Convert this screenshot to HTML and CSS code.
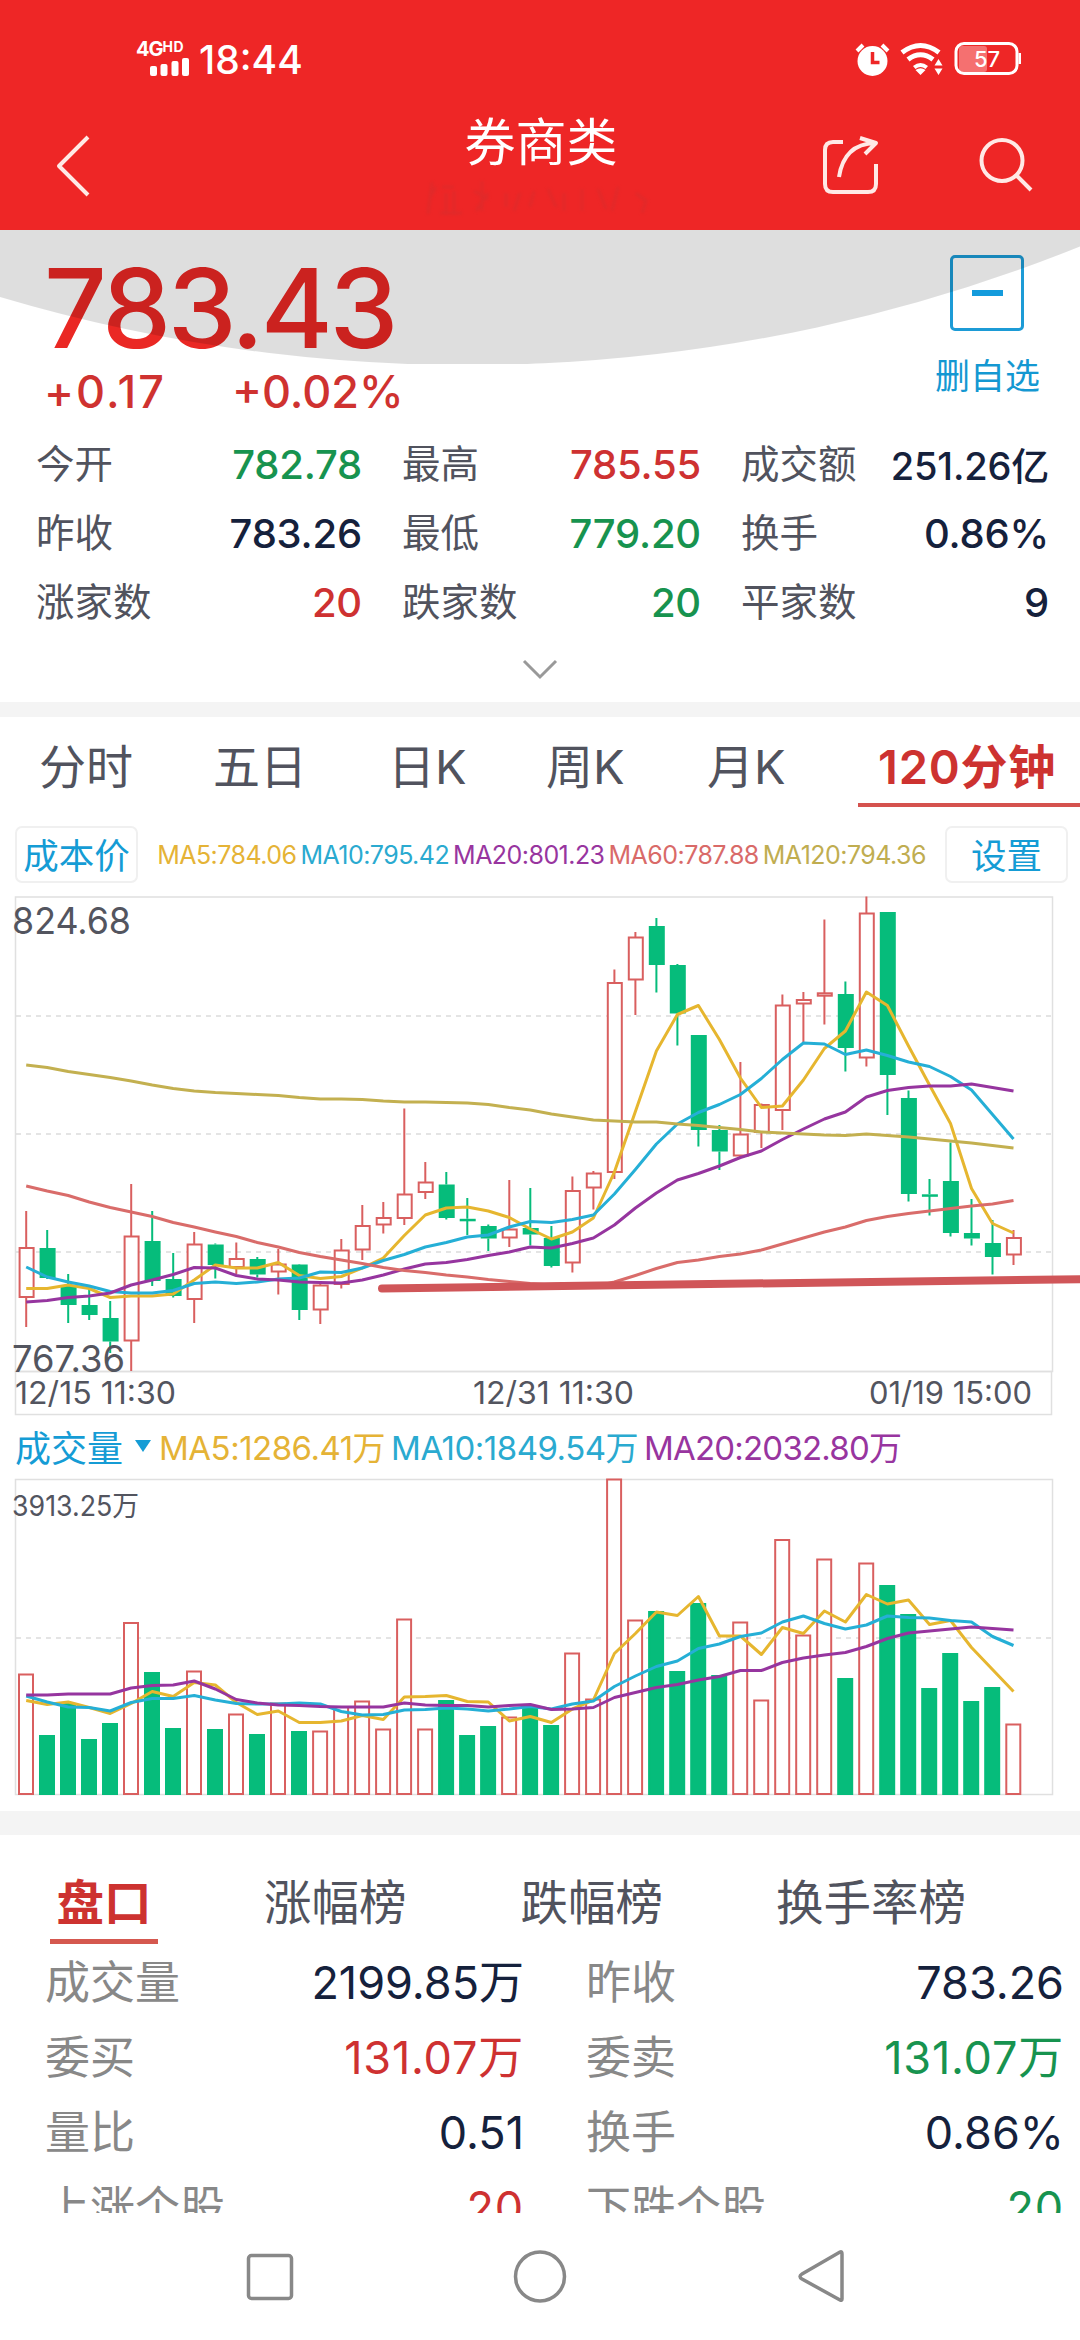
FILE: index.html
```html
<!DOCTYPE html>
<html lang="zh-CN">
<head>
    <meta charset="UTF-8">
    <meta name="viewport" content="width=device-width, initial-scale=1.0">
    <title>券商类</title>
    <link rel="stylesheet" href="styles.css">
</head>
<body>
    <header class="header">
        <div class="status">
            <div class="signal">
                <div class="network">4G<sup>HD</sup></div>
                <svg class="bars" width="40" height="19" viewBox="0 0 40 19">
                    <rect x="0" y="8" width="7" height="10" rx="2"/>
                    <rect x="10.500" y="6" width="7" height="12" rx="2"/>
                    <rect x="21.500" y="3" width="7" height="15" rx="2"/>
                    <rect x="32" y="0" width="7" height="18" rx="2"/>
                </svg>
            </div>
            <div class="clock">18:44</div>
            <svg class="status-icons" width="170" height="40" viewBox="0 0 170 40">
                <!-- alarm -->
                <circle cx="21.500" cy="22" r="15" fill="#fff"/>
                <path d="M6 12l6-6M37 12l-6-6" stroke="#fff" stroke-width="4"/>
                <path d="M21.500 13v10.500h7" fill="none" stroke="#ee2626" stroke-width="3.500"/>
                <!-- wifi -->
                <path d="M51 13.500Q69.500-0.500 88 13.500M57 20.500Q69.500 11 82 20.500" fill="none" stroke="#fff" stroke-width="5"/>
                <path d="M62 27Q69.500 21 77 27l-2.500 3Q69.500 26 64.500 30zM64.500 31Q69.500 27.500 74.500 31L69.500 36z" fill="#fff"/>
                <path d="M87.500 20l4 6.500h-8zM87.500 36l4-6.500h-8z" fill="#fff"/>
                <!-- battery -->
                <rect x="108" y="7" width="28" height="26" rx="3" fill="#f57070"/>
                <rect x="105" y="4.500" width="61" height="30" rx="8" fill="none" stroke="#fff" stroke-width="3"/>
                <path d="M169 14v11" stroke="#fff" stroke-width="3"/>
                <text x="123" y="27.500" class="battery-text">57</text>
            </svg>
        </div>
        <div class="title-bar">
            <svg class="back" width="34" height="62" viewBox="0 0 34 62">
                <path d="M32 2L3 31l29 29"/>
            </svg>
            <h1>券商类</h1>
            <svg class="actions" width="220" height="64" viewBox="0 0 220 64">
                <path d="M24 11H14q-8 0-8 8v34q0 8 8 8h35q8 0 8-8V33"/>
                <path d="M20 46Q25 13 56 12M41 7l16 5-11 11"/>
                <circle cx="183" cy="29.500" r="20.500"/>
                <path d="M197 44l15 15"/>
            </svg>
        </div>
        <svg class="subtitle" width="232" height="40" viewBox="0 0 232 40">
            <path d="M8 3l-4 32M12 8l-6 10M18 8h12M22 14v22M30 12v24M16 34h22M58 2v30M50 12l14 8M64 14l-12 18M82 14v14M96 14l-6 18M110 12l-4 16M124 10l8 18M140 14v18M158 10v22M174 10l8 20M194 8l-6 24M212 14l10 8-4 12"/>
        </svg>
    </header>

    <section class="quote">
        <div class="quote-top">
            <div>
                <div class="price">783.43</div>
                <div class="change"><span>+0.17</span><span>+0.02%</span></div>
            </div>
            <div class="watch">
                <div class="watch-box"><i></i></div>
                <div>删自选</div>
            </div>
        </div>
        <div class="stats">
            <div><span>今开</span><b class="green">782.78</b></div>
            <div><span>最高</span><b class="red">785.55</b></div>
            <div><span>成交额</span><b class="amount">251.26亿</b></div>
            <div><span>昨收</span><b>783.26</b></div>
            <div><span>最低</span><b class="green">779.20</b></div>
            <div><span>换手</span><b>0.86%</b></div>
            <div><span>涨家数</span><b class="red">20</b></div>
            <div><span>跌家数</span><b class="green">20</b></div>
            <div><span>平家数</span><b>9</b></div>
        </div>
        <svg class="more" width="36" height="22" viewBox="0 0 36 22"><path d="M2 2l16 16L34 2"/></svg>
        <svg class="arc" width="1080" height="134" viewBox="0 0 1080 134">
            <path d="M0 0H1080V16.500A1640 1640 0 0 1 0 67z"/>
        </svg>
    </section>

    <section class="chart">
        <nav class="periods">
            <span>分时</span><span>五日</span><span>日K</span><span>周K</span><span>月K</span><span class="active">120分钟</span>
        </nav>
        <div class="indicators">
            <button class="cost">成本价</button>
            <div class="ma-list">
                <span class="ma5">MA5:784.06</span><span class="ma10">MA10:795.42</span><span class="ma20">MA20:801.23</span><span class="ma60">MA60:787.88</span><span class="ma120">MA120:794.36</span>
            </div>
            <button>设置</button>
        </div>
        <svg id="kline" width="1080" height="530" viewBox="0 8 1080 530"></svg>
        <div class="volume-head">
            <span class="volume-name">成交量</span>
            <i class="arrow"></i>
            <span class="ma5">MA5:1286.41万</span>
            <span class="ma10">MA10:1849.54万</span>
            <span class="ma20">MA20:2032.80万</span>
        </div>
        <svg id="volume" width="1080" height="333" viewBox="0 55 1080 333"></svg>
    </section>

    <section class="detail">
        <nav class="detail-tabs">
            <span class="active">盘口</span><span>涨幅榜</span><span>跌幅榜</span><span>换手率榜</span>
        </nav>
        <div class="detail-grid">
            <div><span>成交量</span><b>2199.85万</b></div>
            <div><span>昨收</span><b>783.26</b></div>
            <div><span>委买</span><b class="red">131.07万</b></div>
            <div><span>委卖</span><b class="green">131.07万</b></div>
            <div><span>量比</span><b>0.51</b></div>
            <div><span>换手</span><b>0.86%</b></div>
            <div><span>上涨个股</span><b class="red">20</b></div>
            <div><span>下跌个股</span><b class="green">20</b></div>
        </div>
    </section>

    <footer class="system-nav">
        <svg width="1080" height="127" viewBox="0 0 1080 127">
            <rect x="248.500" y="42.500" width="43" height="43" rx="3"/>
            <circle cx="540" cy="63.500" r="24.500"/>
            <path d="M842 41v45q0 2-2 1L802 66q-4-2.500 0-5l38-22q2-1 2 2z"/>
        </svg>
    </footer>
    <script src="script.js"></script>
</body>
</html>
```
FILE: styles.css
```css
* {
    box-sizing: border-box;
}

body {
    margin: 0;
    width: 1080px;
    height: 2340px;
    overflow: hidden;
    background-color: #fff;
    font-family: Inter, "Noto Sans CJK SC", sans-serif;
    color: #51535e;
}

svg {
    display: block;
}

b {
    font-weight: 500;
    color: #15213c;
}

.red {
    color: #ce3131;
}

.green {
    color: #17934f;
}

/* header */
.header {
    height: 230px;
    background-color: #ee2626;
    color: #fff;
    position: relative;
}

.status {
    display: flex;
    height: 80px;
    padding-top: 39px;
    padding-left: 136px;
}

.signal {
    width: 63px;
}

.network {
    height: 19px;
    line-height: 21px;
    font-size: 20px;
    font-weight: 700;
    letter-spacing: -1px;
}

.network sup {
    font-size: 14px;
    line-height: 0;
    vertical-align: 4px;
    letter-spacing: 0.5px;
}

.bars {
    margin-left: 14px;
    fill: #fff;
}

.clock {
    width: 652px;
    font-size: 39px;
    line-height: 42px;
    font-weight: 500;
}

.battery-text {
    font-size: 22px;
    font-weight: 500;
    fill: #fff;
}

.title-bar {
    display: flex;
    justify-content: space-between;
    height: 130px;
    padding: 25px 41px 0 56px;
}

.title-bar svg {
    fill: none;
    stroke: #ffe9e6;
    stroke-width: 4;
    stroke-linejoin: round;
}

.back {
    margin-top: 30px;
}

.actions {
    margin-top: 26px;
}

.title-bar h1 {
    margin: 0 0 0 173px;
    font-size: 51px;
    line-height: 76px;
    font-weight: 400;
}

.subtitle {
    position: absolute;
    left: 424px;
    top: 179px;
    fill: none;
    stroke: #d72d2d;
    stroke-width: 3;
    opacity: 0.6;
    filter: blur(1.5px);
}

/* quote */
.quote {
    position: relative;
    height: 487px;
    border-bottom: 15px solid #f4f4f4;
}

.arc {
    position: absolute;
    left: 0;
    top: 0;
    fill: rgba(0, 0, 0, 0.13);
}

.quote-top {
    display: flex;
    justify-content: space-between;
    height: 200px;
    padding: 25px 40px 0 44px;
}

.price {
    height: 105px;
    font-size: 110px;
    line-height: 106px;
    font-weight: 500;
    letter-spacing: -3.4px;
    color: #ea2824;
}

.change {
    display: flex;
    gap: 66px;
    font-size: 45px;
    line-height: 64px;
    font-weight: 500;
    color: #cf3230;
}

.change span:first-child {
    letter-spacing: 2px;
}

.watch {
    display: flex;
    flex-direction: column;
    align-items: center;
    font-size: 35px;
    line-height: 54px;
    color: #1498d2;
}

.watch-box {
    display: flex;
    align-items: center;
    justify-content: center;
    width: 74px;
    height: 76px;
    margin-bottom: 18px;
    border: 3px solid #1c9bd6;
    border-radius: 5px;
}

.watch-box i {
    width: 31px;
    height: 6px;
    background-color: #149bdc;
}

.stats {
    display: grid;
    grid-template-columns: 326px 299px 308px;
    column-gap: 40px;
    grid-auto-rows: 69px;
    padding-left: 36px;
}

.stats div {
    display: flex;
    justify-content: space-between;
    line-height: 69px;
    font-size: 38.500px;
}

.stats b {
    font-size: 40px;
    letter-spacing: -0.2px;
}

.stats .amount {
    font-size: 38px;
    padding-top: 2px;
}

.more {
    margin: 22px auto 0;
    fill: none;
    stroke: #999;
    stroke-width: 3;
}

/* charts */
.chart {
    height: 1118px;
    border-bottom: 24px solid #f4f4f4;
}

.periods {
    display: flex;
    height: 90px;
    padding-left: 39px;
    font-size: 47px;
    line-height: 99px;
}

.periods span:nth-child(1) {
    width: 174px;
}

.periods span:nth-child(2) {
    width: 175px;
}

.periods span:nth-child(3) {
    width: 158px;
}

.periods span:nth-child(4) {
    width: 161px;
}

.periods span:nth-child(5) {
    width: 151px;
}

.periods .active {
    flex: 1;
    padding-left: 20px;
    border-bottom: 4px solid #d5524e;
    font-weight: 600;
    color: #cd3230;
    letter-spacing: 0.8px;
    white-space: nowrap;
}

.indicators {
    display: flex;
    align-items: center;
    justify-content: space-between;
    height: 81px;
    padding: 13px 12px 0 15px;
}

.indicators button {
    width: 123px;
    height: 57px;
    padding: 0 0 3px;
    border: 2px solid #f0f0f0;
    border-radius: 7px;
    background-color: #fff;
    font-family: inherit;
    font-size: 35.500px;
    color: #159cd5;
}

.ma-list {
    display: flex;
    gap: 4px;
    padding-top: 2px;
    font-size: 25px;
    letter-spacing: -0.54px;
    white-space: nowrap;
}

.ma5 {
    color: #e5b336;
}

.ma10 {
    color: #2aaad0;
}

.ma20 {
    color: #98359f;
}

.ma60 {
    color: #d96a68;
}

.ma120 {
    color: #c0ad50;
}

.volume-head {
    display: flex;
    align-items: center;
    gap: 6px;
    height: 57px;
    padding-left: 15px;
    padding-bottom: 1px;
    font-size: 33px;
    letter-spacing: -0.5px;
    white-space: nowrap;
}

.volume-head .ma20 {
    letter-spacing: -0.8px;
}

.volume-name {
    font-size: 36px;
    letter-spacing: 0;
    color: #159cd5;
}

.arrow {
    margin: 0 2px 0 6px;
    border: 8px solid transparent;
    border-top: 12px solid #159cd5;
    border-bottom: 0;
}

.box {
    fill: none;
    stroke: #e0e0e0;
    stroke-width: 1.5;
}

.grid-line {
    stroke: #dcdcdc;
    stroke-width: 1.5;
    stroke-dasharray: 5 5;
}

.up {
    fill: #fff;
    stroke: #d95f5f;
    stroke-width: 2;
}

.down {
    fill: #06bc7b;
    stroke: #06bc7b;
    stroke-width: 2;
}

.line {
    fill: none;
    stroke-width: 3;
    stroke-linejoin: round;
}

.line-ma5 {
    stroke: #e6b62f;
}

.line-ma10 {
    stroke: #25afd6;
}

.line-ma20 {
    stroke: #96359f;
}

.line-ma60 {
    stroke: #d96c6a;
}

.line-ma120 {
    stroke: #c3b050;
}

.trend {
    stroke: #d05659;
    stroke-width: 8;
    stroke-linecap: round;
}

.axis {
    fill: #53555f;
}

/* bottom list */
.detail {
    height: 378px;
    overflow: hidden;
}

.detail-tabs {
    display: flex;
    height: 109px;
    padding-left: 50px;
    font-size: 47.5px;
    line-height: 136px;
}

.detail-tabs span:nth-child(2) {
    margin-left: 106px;
}

.detail-tabs span:nth-child(3) {
    margin-left: 114px;
}

.detail-tabs span:nth-child(4) {
    margin-left: 113px;
}

.detail-tabs .active {
    width: 108px;
    border-bottom: 5px solid #d5584f;
    text-align: center;
    font-weight: 700;
    color: #cd3230;
}

.detail-grid {
    display: grid;
    grid-template-columns: 479px 478px;
    column-gap: 62px;
    padding-left: 45px;
}

.detail-grid div {
    display: flex;
    justify-content: space-between;
    height: 75px;
    line-height: 77px;
    font-size: 45px;
    color: #888;
}

.detail-grid b {
    font-weight: 400;
    font-size: 45px;
}

.detail-grid .red,
.detail-grid .green {
    letter-spacing: 0.8px;
}

.system-nav {
    background-color: #fff;
}

.system-nav svg {
    fill: none;
    stroke: #888;
    stroke-width: 3.5;
}
```
FILE: script.js
```js
const STEP = 21.006;
const FIRST = 26.2;

// [up, high, body top, body bottom, low]
const candles = [
    [1, 331, 368, 417, 447], [0, 350, 368, 398, 399], [0, 394, 405, 425, 443], [0, 409, 425, 435, 440],
    [0, 421, 438, 461.5, 473], [1, 304, 356.5, 460.5, 491], [0, 331, 361, 401, 406], [0, 373, 399, 416, 417.5],
    [1, 352, 364.5, 419, 443], [0, 363.5, 364.5, 385, 398.5], [1, 362.5, 379, 387, 394], [0, 377, 379, 394.5, 397.5],
    [1, 369, 384.5, 391.5, 414.5], [0, 384, 384.5, 430, 440], [1, 401, 405.5, 429.5, 444], [1, 359, 370.5, 404, 408.5],
    [1, 325, 346, 369.5, 380], [1, 322, 338, 344.5, 353.5], [1, 228.5, 314.5, 338, 345], [1, 282, 302.5, 312, 319],
    [0, 292, 304.5, 338, 339.5], [0, 318, 338.8, 340.4, 355], [0, 344.5, 346, 358.5, 371], [1, 300, 349.5, 357.5, 367],
    [0, 308, 348, 354.5, 365.5], [0, 346, 358, 386, 387.5], [1, 296.5, 311, 382.5, 392.5], [1, 291, 293.5, 307.5, 329.5],
    [1, 89.5, 103, 292, 299], [1, 52, 57.5, 99.5, 135], [0, 38, 46, 85, 112.5], [0, 84, 85, 133.5, 165.5],
    [0, 155, 155, 250, 266.5], [0, 245, 250, 271.5, 290], [1, 182, 254.5, 275.5, 277], [1, 223.5, 225, 252, 268],
    [1, 114.5, 125.5, 230, 250], [1, 112, 120, 123.5, 163], [1, 39.5, 113.3, 115.7, 144.5], [0, 101.5, 114, 168, 191.5],
    [1, 16.5, 33.5, 177.5, 186.5], [0, 32, 32, 195, 235], [0, 210.5, 218, 314, 321.5], [0, 299, 314.3, 315.7, 335.5],
    [0, 262.5, 301, 353, 356.5], [0, 319, 353, 358.5, 365.5], [0, 340, 363, 377, 394.5], [1, 350, 358, 374.5, 385]
];

const priceLines = {
    ma5: [408.5,408.5,405,408.5,417.5,416,416,414,400,385,388,388,382.5,395.5,398.5,396.5,388,378,355.5,335,328,327,331,337.5,349,359,352,338,292,231.5,171,134.5,125.5,159.5,198,227.5,226,200,168.5,151,112,125.5,166,205,243.5,308.5,343.5,353],
    ma10: [387,397,402,406,411.5,413,413,410.5,403.5,402,403.5,402,399,398,392,392.5,388,380.5,374.5,367,362.5,357,355,347,341.5,342.5,339.5,335,314,289.5,264,244,232.5,224.5,214.5,198.5,179.5,163,164,174.5,170,175.5,182,186.5,196.5,210,234.5,259],
    ma20: [422,420.5,417.5,416,413,405,400,394.5,387.5,388,395.5,399,400,402,402.5,403,400,395,389,384,382.5,379.5,375.5,372,367,368,363.5,358,345,328,313,300,293.5,286,277.5,271,259.5,249,239,232,217,210.5,207.5,206,206,204,207.5,211],
    ma60: [306,311,315.5,322,327.5,332,336.5,342.5,347,352,356.5,362.5,367,372.5,376.5,380,383.5,387.5,390.5,392.5,395,397,399.5,401.5,403.5,405,406,407,402,395.5,388.5,382.5,380,376.5,374,370,364,358,352,347,340.5,336.5,333.5,331,328.5,326,324,320.5],
    ma120: [185,187.5,191.5,194.5,197.5,201,205,208.5,211,212.5,213.5,214.5,215.5,217.5,219,219,219.5,221,222,222,222.5,223,224.5,227.5,230,234,237,240,241,242,242,244,245.5,247.5,249.5,252,253,254,255,255.5,254,255.5,257,259,261,263,265.5,268]
};

const volumes = [254.5,315,283,319,303,203,252,308,251.5,309,294.5,314,283.5,311,311.5,287,281.5,309.5,199.5,309.5,280,315,306,297.5,287,305,233.5,279.5,59.5,200.5,191,251,183,255,202.5,280.5,120,215.5,139.5,258,143.5,165,194,268,233,281,267,304.5];

const volumeLines = {
    ma5: [280.5,284.5,282,287.5,293.5,283.5,271.5,276.5,262.5,265,282.5,294.5,291,302.5,302.5,301,295.5,299.5,277,276.5,275.5,281.5,282,301,296.5,302.5,289,280,233.5,213.5,192,195.5,176.5,216,216,234.5,207.5,213.5,191,202,174.5,184,180,204.5,200.5,227.5,249.5,271.5],
    ma10: [276,282,287,287.5,291,282.5,278.5,278.5,275.5,280,283.5,284,284,283,284,291.5,295,294.5,290,289.5,288,289,291,289,286.5,289,284,281,266.5,256,246.5,241,228.5,224,216.5,213,202,196,203.5,209,205,196,197.5,198,200.5,202,216.5,225.5],
    ma20: [275,275,274,274,274,268,265.5,265,261,269,279.5,283,285,285.5,286.5,287,287,287,283,285,285.5,285.5,287,285.5,284.5,289.5,289,287.5,277.5,272.5,267.5,264.5,260,256.5,250.5,250.5,242.5,238,235,232.5,226.5,218.5,213,211,209,207,208.5,210]
};

function xAt(i) {
    return FIRST + i * STEP;
}

function drawBox(top, bottom, right) {
    return `<rect class="box" x="15.500" y="${top}" width="${right - 15.5}" height="${bottom - top}"/>`;
}

function drawGrid(y) {
    return `<line class="grid-line" x1="16" x2="1052" y1="${y}" y2="${y}"/>`;
}

function drawLines(lines) {
    let out = '';
    for (const name in lines) {
        const points = lines[name].map((y, i) => `${xAt(i).toFixed(1)},${y}`).join(' ');
        out += `<polyline class="line line-${name}" points="${points}"/>`;
    }
    return out;
}

function drawLabel(x, y, size, width, text) {
    return `<text class="axis" x="${x}" y="${y}" font-size="${size}" textLength="${width}" lengthAdjust="spacingAndGlyphs">${text}</text>`;
}

function drawBody(i, top, bottom, up) {
    return `<rect class="${up ? 'up' : 'down'}" x="${(xAt(i) - 6.6).toFixed(1)}" y="${top}" width="14" height="${Math.max(bottom - top, 0.5)}"/>`;
}

let kline = drawBox(17, 491.5, 1052.5) + drawBox(491.5, 534.5, 1051.5);
kline += drawGrid(136) + drawGrid(254) + drawGrid(372);
candles.forEach(([up, high, top, bottom, low], i) => {
    const x = xAt(i).toFixed(1);
    kline += `<path class="${up ? 'up' : 'down'}" d="M${x} ${high}V${top}M${x} ${bottom}V${low}"/>`;
    kline += drawBody(i, up ? top : top + 1, up ? bottom : bottom - 1, up);
});
kline += drawLines(priceLines);
kline += '<line class="trend" x1="382" y1="408.500" x2="1090" y2="399"/>';
kline += drawLabel(12, 53.5, 37, 119, '824.68');
kline += drawLabel(12, 491.5, 37, 113, '767.36');
kline += drawLabel(15, 524, 31, 161, '12/15 11:30');
kline += drawLabel(473, 524, 31, 161, '12/31 11:30');
kline += drawLabel(869, 524, 31, 163, '01/19 15:00');
document.getElementById('kline').innerHTML = kline;

let volume = drawBox(59.5, 374.5, 1052.5) + drawGrid(218);
volumes.forEach((top, i) => {
    const up = candles[i][0];
    volume += drawBody(i - 0.03, up ? top : top + 1, 374, up);
});
volume += drawLines(volumeLines);
volume += drawLabel(12, 96, 28.5, 127, '3913.25万');
document.getElementById('volume').innerHTML = volume;
```
